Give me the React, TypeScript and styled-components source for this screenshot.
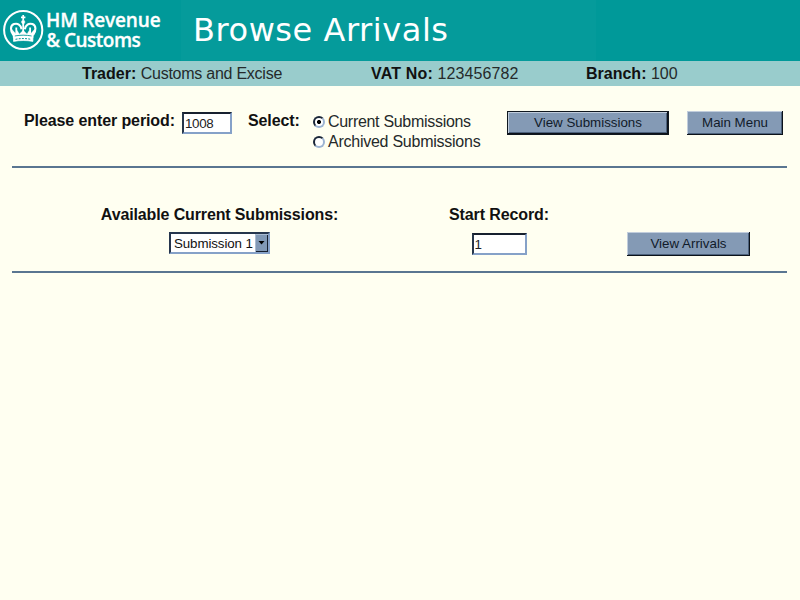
import React, { useState } from "react";
import styled, { createGlobalStyle } from "styled-components";

const GlobalStyle = createGlobalStyle`
  * { box-sizing: border-box; }
  body {
    margin: 0;
    background: #fffff1;
    color: #111;
    font-family: "Liberation Sans", Arial, sans-serif;
    font-size: 16px;
    line-height: 20px;
    overflow: hidden;
  }
`;

const Page = styled.div`
  width: 800px;
  height: 600px;
  display: flex;
  flex-direction: column;
  white-space: nowrap;
`;

const Header = styled.header`
  height: 61px;
  display: flex;
  background: linear-gradient(90deg, #009999 0 181px, #059b9b 181px 596px, #009999 596px);
`;

const Brand = styled.div`
  width: 193px;
  display: flex;
  padding: 9px 0 0 3px;
`;

const BrandName = styled.div`
  margin: 1px 0 0 1px;
  color: #fff;
  font-family: "Open Sans", "Noto Sans", sans-serif;
  font-weight: 600;
  font-size: 19px;
  line-height: 20px;
  -webkit-text-stroke: 0.3px #fff;
`;

const BrandLine = styled.div<{ $track: number }>`
  letter-spacing: ${(p) => p.$track}px;
`;

const Title = styled.h1`
  margin: 0;
  padding-top: 10px;
  color: #fff;
  font: 400 32px/40px "DejaVu Sans", Verdana, sans-serif;
  letter-spacing: 0.55px;
`;

const InfoBar = styled.div`
  height: 25px;
  display: grid;
  grid-template-columns: 289px 215px 1fr;
  padding: 3px 0 0 82px;
  background: #99cccc;
`;

const Text = styled.span<{ $bold?: boolean; $track?: number }>`
  font-weight: ${(p) => (p.$bold ? 700 : 400)};
  color: ${(p) => (p.$bold ? "#111" : "#252a2a")};
  letter-spacing: ${(p) => p.$track ?? 0}px;
`;

const Main = styled.main`
  width: 775px;
  margin-left: 12px;
`;

const PeriodRow = styled.form`
  height: 82px;
  border-bottom: 2px solid #5a7691;
  display: grid;
  grid-template-columns: 158px 66px 65px 194px 180px 96px;
  align-items: start;
  padding-left: 12px;
`;

const SubmissionRow = styled.form`
  height: 105px;
  border-bottom: 2px solid #5a7691;
  display: grid;
  grid-template-columns: 415px 144px 56px 1fr;
  align-items: start;
  padding-top: 37px;
`;

const Cell = styled.div<{ $top: number; $column?: number }>`
  padding-top: ${(p) => p.$top}px;
  grid-column: ${(p) => p.$column ?? "auto"};
`;

const Stack = styled.div<{ $gap: number }>`
  display: flex;
  flex-direction: column;
  align-items: center;
  gap: ${(p) => p.$gap}px;
`;

const Field = styled.input<{ $width: number }>`
  display: block;
  width: ${(p) => p.$width}px;
  height: 22px;
  padding: 0 0 0 1px;
  background: #fff;
  border: 2px solid;
  border-color: #17202f #86a1c8 #86a1c8 #27364a;
  outline: 0;
  border-radius: 0;
  color: #222;
  font: 13.33px "Liberation Sans", Arial, sans-serif;
  letter-spacing: -0.3px;
`;

const Button = styled.button<{ $width: number; $default?: boolean }>`
  display: block;
  width: ${(p) => p.$width}px;
  height: 24px;
  padding: 0 0 1px;
  color: #111b2a;
  background: #849ab5;
  border: ${(p) => (p.$default ? "1px solid #101820" : "0")};
  border-radius: 0;
  box-shadow: inset -1px -1px #0c1219, inset 1px 1px #c1cddc, inset -2px -2px #4c617c;
  font: 13.33px "Liberation Sans", Arial, sans-serif;
`;

const RadioLabel = styled.label`
  display: flex;
  align-items: center;
  gap: 3px;
  height: 20px;
`;

const RadioInput = styled.input`
  appearance: none;
  width: 12px;
  height: 12px;
  margin: 0 0 1px;
  border: 2px solid;
  border-color: #1a2638 #9db4d3 #9db4d3 #1a2638;
  border-radius: 50%;
  background: #fff;
  &:checked {
    background: radial-gradient(circle, #000 0 1.6px, #fff 2.4px);
  }
`;

const Select = styled.div`
  width: 101px;
  height: 22px;
  display: flex;
  border: 2px solid;
  border-color: #26364e #86a1c8 #86a1c8 #26364e;
  background: #fff;
`;

const SelectValue = styled.div`
  flex: 1;
  padding-left: 3px;
  font-size: 13.33px;
  line-height: 19px;
  letter-spacing: -0.1px;
`;

const SelectArrow = styled.div`
  width: 13px;
  display: grid;
  place-items: center;
  background: #8098b5;
  box-shadow: inset 1px 1px #a9bbd1, inset -1px -1px #17202f;
`;

const CrownLogo = () => (
  <svg width="42" height="42" viewBox="0 0 42 42" fill="none" stroke="#fff">
    <circle cx="20.2" cy="21" r="19.1" strokeWidth="2" />
    <path d="M20.2 6v5.5M18 8.3h4.4" strokeWidth="1.7" />
    <circle cx="20.2" cy="13" r="1.7" fill="#fff" strokeWidth=".5" />
    <path
      d="M10.3 26C7.2 21.5 7 16.6 11 15.1c3.7-1.2 6.8.8 7.6 5.2M30.1 26c3.1-4.5 3.3-9.4-.7-10.9-3.7-1.2-6.8.8-7.6 5.2"
      strokeWidth="2.1"
    />
    <path d="M20.2 14v12M13.3 18.5v6M27.1 18.5v6" strokeWidth="1.8" />
    <path d="M9 20.5l1.2 8.5h20l1.2-8.5-3.6 4-1.6-3-2.2 3.4-3.8-3.6-3.8 3.6-2.2-3.4-1.6 3z" fill="#fff" strokeWidth=".3" />
    <path d="M11.8 27c5.6-1.1 11.2-1.1 16.8 0" stroke="#009999" strokeWidth=".9" />
    <path d="M10.5 28.6c6.4-1.2 13-1.2 19.4 0v3.8c-6.4-1.2-13-1.2-19.4 0z" fill="#fff" strokeWidth=".7" />
    <path d="M12.5 30.3c5.2-1 10.2-1 15.4 0" stroke="#009999" strokeDasharray="2 1.2" />
  </svg>
);

const Arrow = () => (
  <svg width="7" height="4" viewBox="0 0 7 4">
    <path d="M.5 0h6l-3 3.5z" fill="#000" />
  </svg>
);

export default function App() {
  const [mode, setMode] = useState("current");
  return (
    <>
      <GlobalStyle />
      <Page>
        <Header>
          <Brand>
            <CrownLogo />
            <BrandName>
              <BrandLine $track={-0.15}>HM Revenue</BrandLine>
              <BrandLine $track={-0.5}>&amp; Customs</BrandLine>
            </BrandName>
          </Brand>
          <Title>Browse Arrivals</Title>
        </Header>
        <InfoBar>
          <div>
            <Text $bold>Trader:</Text> <Text $track={-0.25}>Customs and Excise</Text>
          </div>
          <div>
            <Text $bold $track={0.2}>VAT No:</Text> <Text $track={0.1}>123456782</Text>
          </div>
          <div>
            <Text $bold>Branch:</Text> <Text>100</Text>
          </div>
        </InfoBar>
        <Main>
          <PeriodRow onSubmit={(e) => e.preventDefault()}>
            <Cell $top={25}>
              <Text $bold $track={-0.1}>Please enter period:</Text>
            </Cell>
            <Cell $top={26}>
              <Field $width={50} defaultValue="1008" />
            </Cell>
            <Cell $top={25}>
              <Text $bold $track={-0.1}>Select:</Text>
            </Cell>
            <Cell $top={26}>
              <RadioLabel>
                <RadioInput type="radio" checked={mode === "current"} onChange={() => setMode("current")} />
                <Text $track={-0.3}>Current Submissions</Text>
              </RadioLabel>
              <RadioLabel>
                <RadioInput type="radio" checked={mode === "archived"} onChange={() => setMode("archived")} />
                <Text $track={-0.25}>Archived Submissions</Text>
              </RadioLabel>
            </Cell>
            <Cell $top={25}>
              <Button $width={162} $default>View Submissions</Button>
            </Cell>
            <Cell $top={25}>
              <Button $width={96}>Main Menu</Button>
            </Cell>
          </PeriodRow>
          <SubmissionRow onSubmit={(e) => e.preventDefault()}>
            <Stack $gap={7}>
              <Text $bold $track={-0.13}>Available Current Submissions:</Text>
              <Select>
                <SelectValue>Submission 1</SelectValue>
                <SelectArrow>
                  <Arrow />
                </SelectArrow>
              </Select>
            </Stack>
            <Stack $gap={8}>
              <Text $bold $track={-0.1}>Start Record:</Text>
              <Field $width={55} defaultValue="1" />
            </Stack>
            <Cell $top={27} $column={4}>
              <Button $width={123}>View Arrivals</Button>
            </Cell>
          </SubmissionRow>
        </Main>
      </Page>
    </>
  );
}
